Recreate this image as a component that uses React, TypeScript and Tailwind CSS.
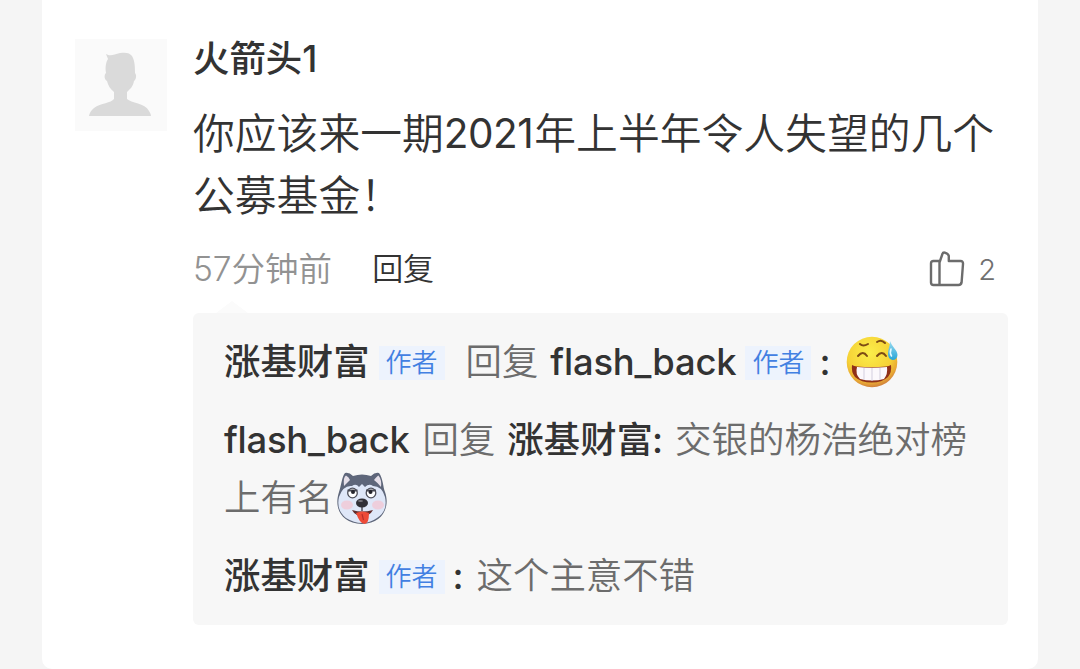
import React from 'react';

interface NameProps {
  children: React.ReactNode;
  className?: string;
}

const Name: React.FC<NameProps> = ({ children, className = '' }) => (
  <span className={`font-medium text-[#333] whitespace-nowrap ${className}`}>{children}</span>
);

const AuthorTag: React.FC<{ className?: string }> = ({ className = '' }) => (
  <span className={`w-[66px] h-[34px] flex items-center justify-center bg-[#edf3fd] text-[#4280e2] text-[26px] font-[350] leading-none whitespace-nowrap ${className}`}>
    作者
  </span>
);

const Avatar = () => (
  <div className="w-[92px] h-[92px] mt-[39px] ml-[33px] bg-[#fafafa] shrink-0">
    <svg viewBox="0 0 92 92" className="w-full h-full">
      <path
        d="M31 15 C36 18 39 15 45 14 C51 13 55 14 57 17 C60 22 60 29 60 34 C62 36 61 41 59 42 C58 48 55 50 52 53 L52 60 C56 64 70 64 74 72 Q76 75 76 77 L14 77 Q15 72 19 69 C26 64 36 64 39 60 L39 53 C35 50 33 46 32 42 C29 40 29 36 31 34 C30 28 31 23 33 20 Z"
        fill="#dadada"
      />
    </svg>
  </div>
);

const ThumbIcon = () => (
  <svg
    viewBox="0 0 36 36"
    className="w-9 h-9 mb-[3px]"
    fill="none"
    stroke="#6c6c6c"
    strokeWidth="2.4"
    strokeLinejoin="round"
    strokeLinecap="round"
  >
    <path d="M10.500 10 H4.500 Q2 10 2 12.500 V31.500 Q2 34 4.500 34 H29.500 Q32.200 34 32.600 31.300 L34 13 Q34.200 10 31.500 10 H19.800 V5 Q19.400 2.800 15.800 1.600 Q13.900 1.300 13.400 3 L10.500 11.500 V33.500" />
  </svg>
);

const SweatSmile = () => (
  <svg viewBox="0 0 52 52" className="w-[52px] h-[52px]">
    <defs>
      <radialGradient id="face" cx="0.45" cy="0.32" r="0.68">
        <stop offset="0" stopColor="#fbee4a" />
        <stop offset="0.65" stopColor="#f6d236" />
        <stop offset="0.88" stopColor="#e8a834" />
        <stop offset="1" stopColor="#d0803c" />
      </radialGradient>
      <linearGradient id="drop" x1="0" y1="0" x2="0" y2="1">
        <stop offset="0" stopColor="#9bdcf0" />
        <stop offset="1" stopColor="#27a5d8" />
      </linearGradient>
    </defs>
    <circle cx="26" cy="26" r="25.300" fill="url(#face)" />
    <g fill="none" stroke="#7d4b14" strokeWidth="2" strokeLinecap="round">
      <path d="M14 8 Q17 11 22 8" />
      <path d="M31 6 Q35 3 39 7" />
      <path d="M12 20 Q17 14 21 20" />
      <path d="M31 20 Q36 14 40 20" />
    </g>
    <path d="M6 29 Q8 30 11 30.500 Q26 32 40 30.500 Q43 30 45 29 Q46 36 42 41 Q36 46.500 26 46.500 Q15 46.500 9 41 Q5 36 6 29Z" fill="#8f2f18" />
    <path d="M11 31 Q26 32.500 41 31 Q42 38 38 43 Q26 46 14 43 Q9 38 11 31Z" fill="#fbf8fc" />
    <path d="M18 32 V43.500 M26 32 V45 M34 32 V43.500" stroke="#d3cfdf" strokeWidth="1" />
    <path d="M44 5 C46 11 51.500 14 51.500 19 Q51 24 46.500 24 Q42 23 42 18 C42 13 44 10 44 5Z" fill="url(#drop)" />
    <path d="M45 13 Q43.500 17 45.500 20" stroke="#e6faff" strokeWidth="1.600" fill="none" strokeLinecap="round" />
  </svg>
);

const Husky = () => (
  <svg viewBox="0 0 52 52" className="w-[52px] h-[52px]">
    <path d="M3 20 C5 15 6 4 9 1 Q13 0 17 4 Q26 1 35 4 Q39 0 43 1 C47 6 47 15 49 20 C54 34 48 51 26 52 C4 51 -2 35 3 20Z" fill="#5e667a" />
    <path d="M8 14 Q7 5 10 3.500 Q13 5 14 8 Q11 11 8 14Z" fill="#e5dfe9" />
    <path d="M38 8 Q41 4 42.500 3.500 Q46 8 45 15 Q42 11 38 8Z" fill="#e5dfe9" />
    <path d="M3 25 Q7 13 16 14 Q20 11 23 15 L26 12 L29 15 Q33 11 37 14 Q46 14 49 25 Q52 39 41 46 Q34 51 26 51 Q18 51 10 46 Q0 38 3 25Z" fill="#dfe7f8" />
    <ellipse cx="11" cy="33" rx="6" ry="4.500" fill="#f3c6d3" opacity="0.75" />
    <ellipse cx="42" cy="33" rx="6" ry="4.500" fill="#f3c6d3" opacity="0.75" />
    <path d="M16 38 Q26 41 37 38 Q35 42 32 43 L21 43 Q18 42 16 38Z" fill="#612c2b" />
    <path d="M20 41 Q26 38 33 41 Q33 52 28.500 52 Q24 52 20 41Z" fill="#ed4b38" />
    <path d="M26 42 L27.500 48" stroke="#b92f2b" strokeWidth="1.200" />
    <path d="M26 35 V39" stroke="#46444e" strokeWidth="1.400" />
    <ellipse cx="26" cy="31" rx="6" ry="4.500" fill="#302f36" />
    <ellipse cx="24.500" cy="29" rx="2.500" ry="1" fill="#77757d" />
    <g fill="#fff" stroke="#4d4e59" strokeWidth="1.300">
      <circle cx="16.500" cy="21" r="4.800" />
      <circle cx="35" cy="21" r="4.800" />
    </g>
    <path d="M11.500 18.500 H21.500 M30 18.500 H40" stroke="#4a4b55" strokeWidth="1.800" />
    <circle cx="17" cy="20" r="2" fill="#25252c" />
    <circle cx="34.500" cy="20" r="2" fill="#25252c" />
  </svg>
);

export default function App() {
  return (
    <div className="w-[1080px] h-[669px] overflow-hidden bg-[#f5f5f5] font-['Inter','Noto_Sans_CJK_SC',sans-serif]">
      <div className="w-[996px] h-[669px] ml-[42px] bg-white rounded-b-[10px] flex items-start">
        <Avatar />
        <div className="ml-[26px] w-[815px] pt-[38px]">
          <div className="h-[42px] flex items-center text-[36.4px] leading-none">
            <Name>火箭头1</Name>
          </div>

          <div className="mt-[23px] text-[41.8px] leading-[62px] text-[#333] font-[350] whitespace-nowrap">
            <div className="h-[62px] flex">
              <span>你应该来一期</span>
              <span className="w-[90.5px] text-[40.5px] tracking-[-0.5px] font-normal">2021</span>
              <span>年上半年令人失望的几个</span>
            </div>
            <div className="h-[62px]">公募基金！</div>
          </div>

          <div className="mt-[22px] h-[42px] flex items-center leading-none">
            <span className="text-[33.5px] font-[350] text-[#929292]">57分钟前</span>
            <span className="ml-[40px] mb-[3px] text-[31px] font-[350] text-[#333]">回复</span>
            <div className="ml-auto mr-[12px] flex items-center text-[#707070]">
              <ThumbIcon />
              <span className="ml-[13px] mb-[2px] text-[29px] font-[350]">2</span>
            </div>
          </div>

          <svg viewBox="0 0 32 12" className="w-8 h-3 ml-[23px] mt-[10px]">
            <path d="M0 12 L16 0 L32 12Z" fill="#fbfbfb" />
          </svg>
          <div className="h-[312px] bg-[#f7f7f7] rounded-md pl-[31px] pt-[23px] text-[36.4px] leading-none text-[#6c6c6c] font-[350]">
            <div className="h-[52px] flex items-center">
              <Name>涨基财富</Name>
              <AuthorTag className="ml-[9px] mt-[2px]" />
              <span className="ml-[21px]">回复</span>
              <Name className="ml-[12px] tracking-[-0.2px]">flash_back</Name>
              <AuthorTag className="ml-[9px] mt-[2px]" />
              <Name className="ml-[8px]">:</Name>
              <div className="ml-[16px]"><SweatSmile /></div>
            </div>

            <div className="mt-[26px] h-[52px] flex items-center">
              <Name className="tracking-[-0.25px]">flash_back</Name>
              <span className="ml-[13px]">回复</span>
              <Name className="ml-[12px]">涨基财富<span className="-ml-px">:</span></Name>
              <span className="ml-[12px] text-[36.5px]">交银的杨浩绝对榜</span>
            </div>
            <div className="mt-[6px] h-[52px] flex items-center">
              <span>上有名</span>
              <div className="ml-[3px]"><Husky /></div>
            </div>

            <div className="mt-[26px] h-[52px] flex items-center">
              <Name>涨基财富</Name>
              <AuthorTag className="ml-[9px] mt-[2px]" />
              <Name className="ml-[8px]">:</Name>
              <span className="ml-[13px]">这个主意不错</span>
            </div>
          </div>
        </div>
      </div>
    </div>
  );
}
